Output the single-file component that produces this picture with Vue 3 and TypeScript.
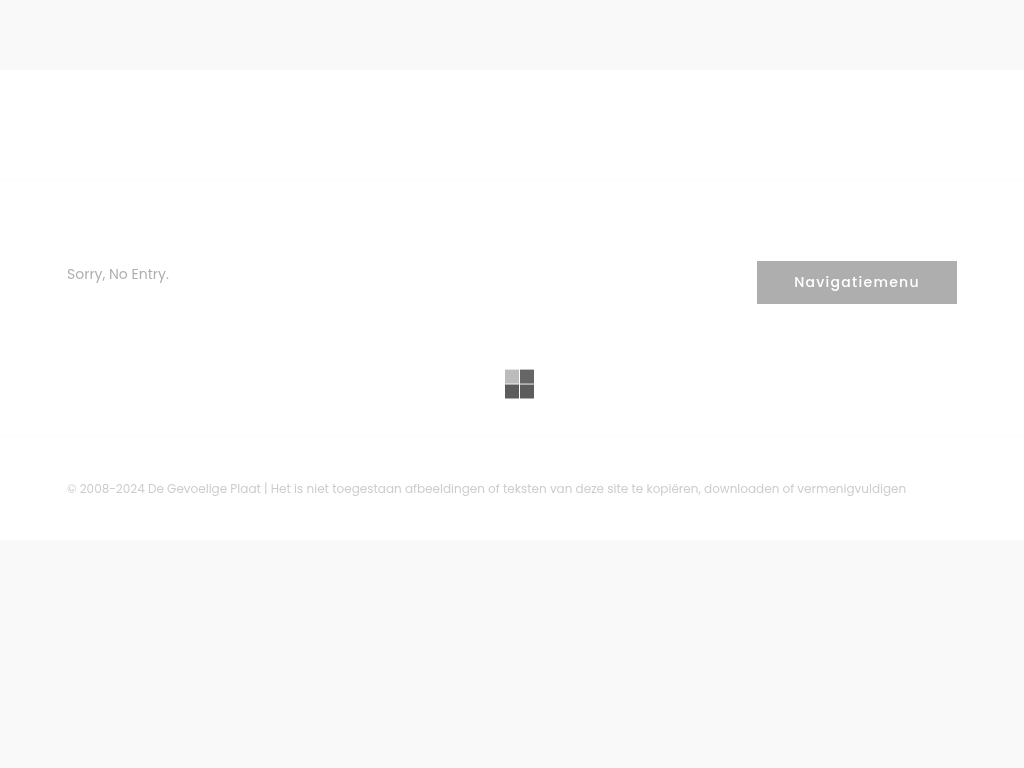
<script setup lang="ts">
const year: string = '2008-2024'

interface Cell {
  x: number
  y: number
  fill: string
}
const cells: Cell[] = [
  { x: 0, y: 0.6, fill: '#bbb' },
  { x: 15, y: 0.6, fill: '#666' },
  { x: 0, y: 15.5, fill: '#5c5c5c' },
  { x: 15, y: 15.5, fill: '#5c5c5c' },
]
</script>

<template>
  <div class="page">
    <div class="site">
      <header class="header"></header>
      <main class="main">
        <p class="entry">Sorry, No Entry.</p>
        <nav aria-label="Navigatiemenu">
          <button class="menu" type="button">Navigatiemenu</button>
        </nav>
      </main>
      <footer class="footer">
        <p class="copyright">© {{ year }} De Gevoelige Plaat | Het is niet toegestaan afbeeldingen of teksten van deze site te kopiëren, downloaden of vermenigvuldigen</p>
      </footer>
    </div>
    <svg class="loader" width="30" height="30" viewBox="0 0 30 30" role="status" aria-label="Laden">
      <rect v-for="(cell, i) in cells" :key="i" :x="cell.x" :y="cell.y" width="14" height="14" :fill="cell.fill" />
    </svg>
  </div>
</template>

<style>
body {
  margin: 0;
  background: #f9f9f9;
}
</style>

<style scoped>
.page {
  box-sizing: border-box;
  min-height: 100vh;
  padding-top: 70px;
  font-family: Poppins, "Open Sans", "Liberation Sans", sans-serif;
}
.site {
  background: #fff;
}
.header {
  height: 110px;
  border-bottom: 1px solid #fcfcfc;
}
.main {
  display: flex;
  justify-content: space-between;
  align-items: flex-start;
  box-sizing: border-box;
  min-height: 254px;
  padding: 80px 67px;
  opacity: 0.4;
  will-change: transform, opacity;
}
.entry {
  margin: 0;
  font-size: 14px;
  line-height: 26px;
  color: #333;
}
.menu {
  display: block;
  width: 200px;
  height: 43px;
  padding: 0;
  border: 0;
  background: #353535;
  color: #fff;
  font-family: inherit;
  font-size: 14px;
  font-weight: 500;
  letter-spacing: 0.09em;
}
.footer {
  padding: 40px 67px 38px;
  border-top: 1px solid #fcfcfc;
}
.copyright {
  margin: 0;
  font-size: 12px;
  line-height: 26px;
  color: #808080;
  opacity: 0.4;
  will-change: transform, opacity;
}
.loader {
  position: fixed;
  top: 50%;
  left: 50%;
  margin: -15px 0 0 -7px;
}
</style>
